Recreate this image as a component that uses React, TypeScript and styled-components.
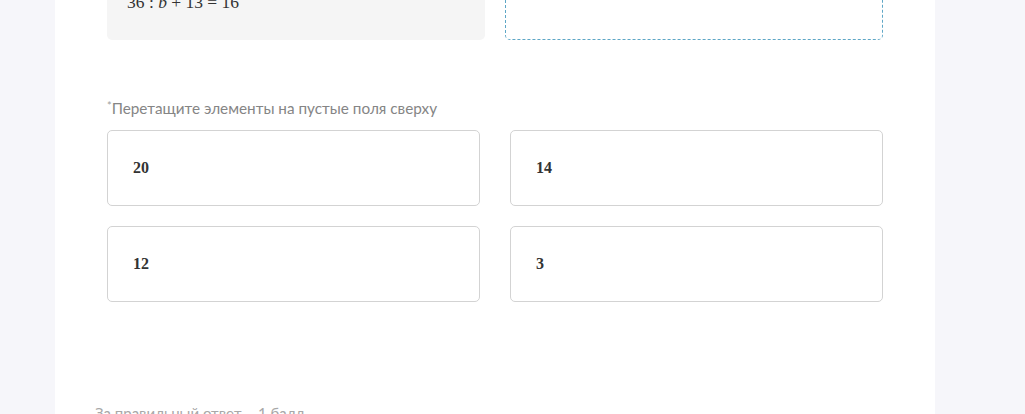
import React from "react";
import styled, { createGlobalStyle } from "styled-components";

const Global = createGlobalStyle`
  html, body {
    margin: 0;
    padding: 0;
    background: #f6f6fa;
    overflow: hidden;
  }
  body {
    font-family: "Lato", "Noto Sans", sans-serif;
  }
`;

const Page = styled.div`
  height: 414px;
  overflow: hidden;
`;

const Card = styled.main`
  width: 880px;
  margin: -40px 0 0 55px;
  background: #ffffff;
  min-height: 520px;
`;

const Body = styled.section`
  padding: 0 52px;
`;

const TaskRow = styled.div`
  display: grid;
  grid-template-columns: 1fr 1fr;
  gap: 20px;
`;

const Formula = styled.div`
  box-sizing: border-box;
  height: 80px;
  background: #f5f5f5;
  border-radius: 5px;
  padding: 30px 20px 0;
  font-family: "Liberation Serif", "DejaVu Serif", serif;
  font-size: 17.5px;
  line-height: 24px;
  color: #333;
`;

const Var = styled.i`
  font-style: italic;
`;

const DropZone = styled.div`
  box-sizing: border-box;
  height: 80px;
  border: 1px dashed #5fa7c6;
  border-radius: 5px;
  background: #fff;
`;

const Hint = styled.p`
  margin: 56px 0 12px;
  font-size: 15.3px;
  line-height: 20px;
  color: #858585;
`;

const Star = styled.span`
  font-size: 11px;
  vertical-align: 4px;
  color: #a0a0a0;
`;

const Options = styled.div`
  display: grid;
  grid-template-columns: 1fr 1fr;
  column-gap: 30px;
  row-gap: 20px;
`;

const Option = styled.div`
  box-sizing: border-box;
  height: 76px;
  border: 1px solid #d3d3d3;
  border-radius: 5px;
  display: flex;
  align-items: center;
  padding: 0 25px;
  font-family: "Liberation Serif", "DejaVu Serif", serif;
  font-weight: 700;
  font-size: 16px;
  color: #333;
`;

const Footer = styled.footer`
  padding: 101px 40px 0;
  font-size: 15px;
  line-height: 20px;
  color: #a8a8a8;
`;

const options = ["20", "14", "12", "3"];

export default function App() {
  return (
    <Page>
      <Global />
      <Card>
        <Body>
          <TaskRow>
            <Formula>
              36 : <Var>b</Var> + 13 = 16
            </Formula>
            <DropZone />
          </TaskRow>
          <Hint>
            <Star>*</Star>Перетащите элементы на пустые поля сверху
          </Hint>
          <Options>
            {options.map((o) => (
              <Option key={o}>{o}</Option>
            ))}
          </Options>
        </Body>
        <Footer>За правильный ответ – 1 балл</Footer>
      </Card>
    </Page>
  );
}
